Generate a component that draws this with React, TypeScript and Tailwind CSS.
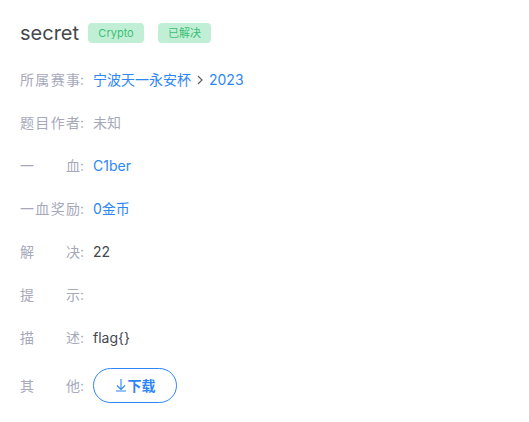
import React from "react";

const font = { fontFamily: 'Inter, "Noto Sans CJK SC", sans-serif' };

function Label({ children }: { children: string }) {
  const text = children.replace(":", "");
  const chars = text.split("");
  const last = chars.pop() as string;
  const parts = [...chars, last + ":"];
  return (
    <div className="flex w-[64px] shrink-0 justify-between whitespace-nowrap text-[14px] text-[#a7a9bb]">
      {parts.map((p, i) => (
        <span key={i}>{p}</span>
      ))}
    </div>
  );
}

function Row({ label, children }: { label: string; children?: React.ReactNode }) {
  return (
    <div className="flex h-[43px] items-center">
      <Label>{label}</Label>
      <div className="ml-[9px] flex items-center text-[14px]">{children}</div>
    </div>
  );
}

export default function App() {
  return (
    <div className="min-h-[422px] w-[529px] bg-white pl-[20px] pt-[19px]" style={font}>
      <div className="flex h-[28px] items-center">
        <span className="text-[20px] leading-[28px] text-[#45474d]">secret</span>
        <span className="ml-[9px] flex h-[20px] w-[56px] items-center justify-center rounded-[4px] bg-[#c1efd5] text-[11px] text-[#3dbf77]">
          Crypto
        </span>
        <span className="ml-[14px] flex h-[20px] w-[53px] items-center justify-center rounded-[4px] bg-[#c1efd5] text-[11px] text-[#3dbf77]">
          已解决
        </span>
      </div>
      <div className="mt-[11px]">
        <Row label="所属赛事:">
          <span className="text-[#2e86f6]">宁波天一永安杯</span>
          <svg className="mx-[5px]" width="8" height="12" viewBox="0 0 8 12" fill="none">
            <path d="M2 2l4 4-4 4" stroke="#606266" strokeWidth="1.2" />
          </svg>
          <span className="text-[#2e86f6]">2023</span>
        </Row>
        <Row label="题目作者:">
          <span className="text-[#a7a9bb]">未知</span>
        </Row>
        <Row label="一血:">
          <span className="text-[#2e86f6]">C1ber</span>
        </Row>
        <Row label="一血奖励:">
          <span className="text-[#2e86f6]">0金币</span>
        </Row>
        <Row label="解决:">
          <span className="text-[#45474d]">22</span>
        </Row>
        <Row label="提示:" />
        <Row label="描述:">
          <span className="text-[#45474d]">flag{"{}"}</span>
        </Row>
        <div className="flex h-[52px] items-center">
          <Label>其他:</Label>
          <button className="ml-[9px] flex h-[35px] w-[84px] items-center justify-center rounded-full border border-[#2e86f6] text-[14px] font-bold text-[#2e86f6]">
            <svg width="12" height="14" viewBox="0 0 12 14" fill="none" className="mr-[1px]">
              <path d="M6 1v10M2 7.5l4 4 4-4M1 13h10" stroke="#2e86f6" strokeWidth="1.1" />
            </svg>
            下载
          </button>
        </div>
      </div>
    </div>
  );
}
